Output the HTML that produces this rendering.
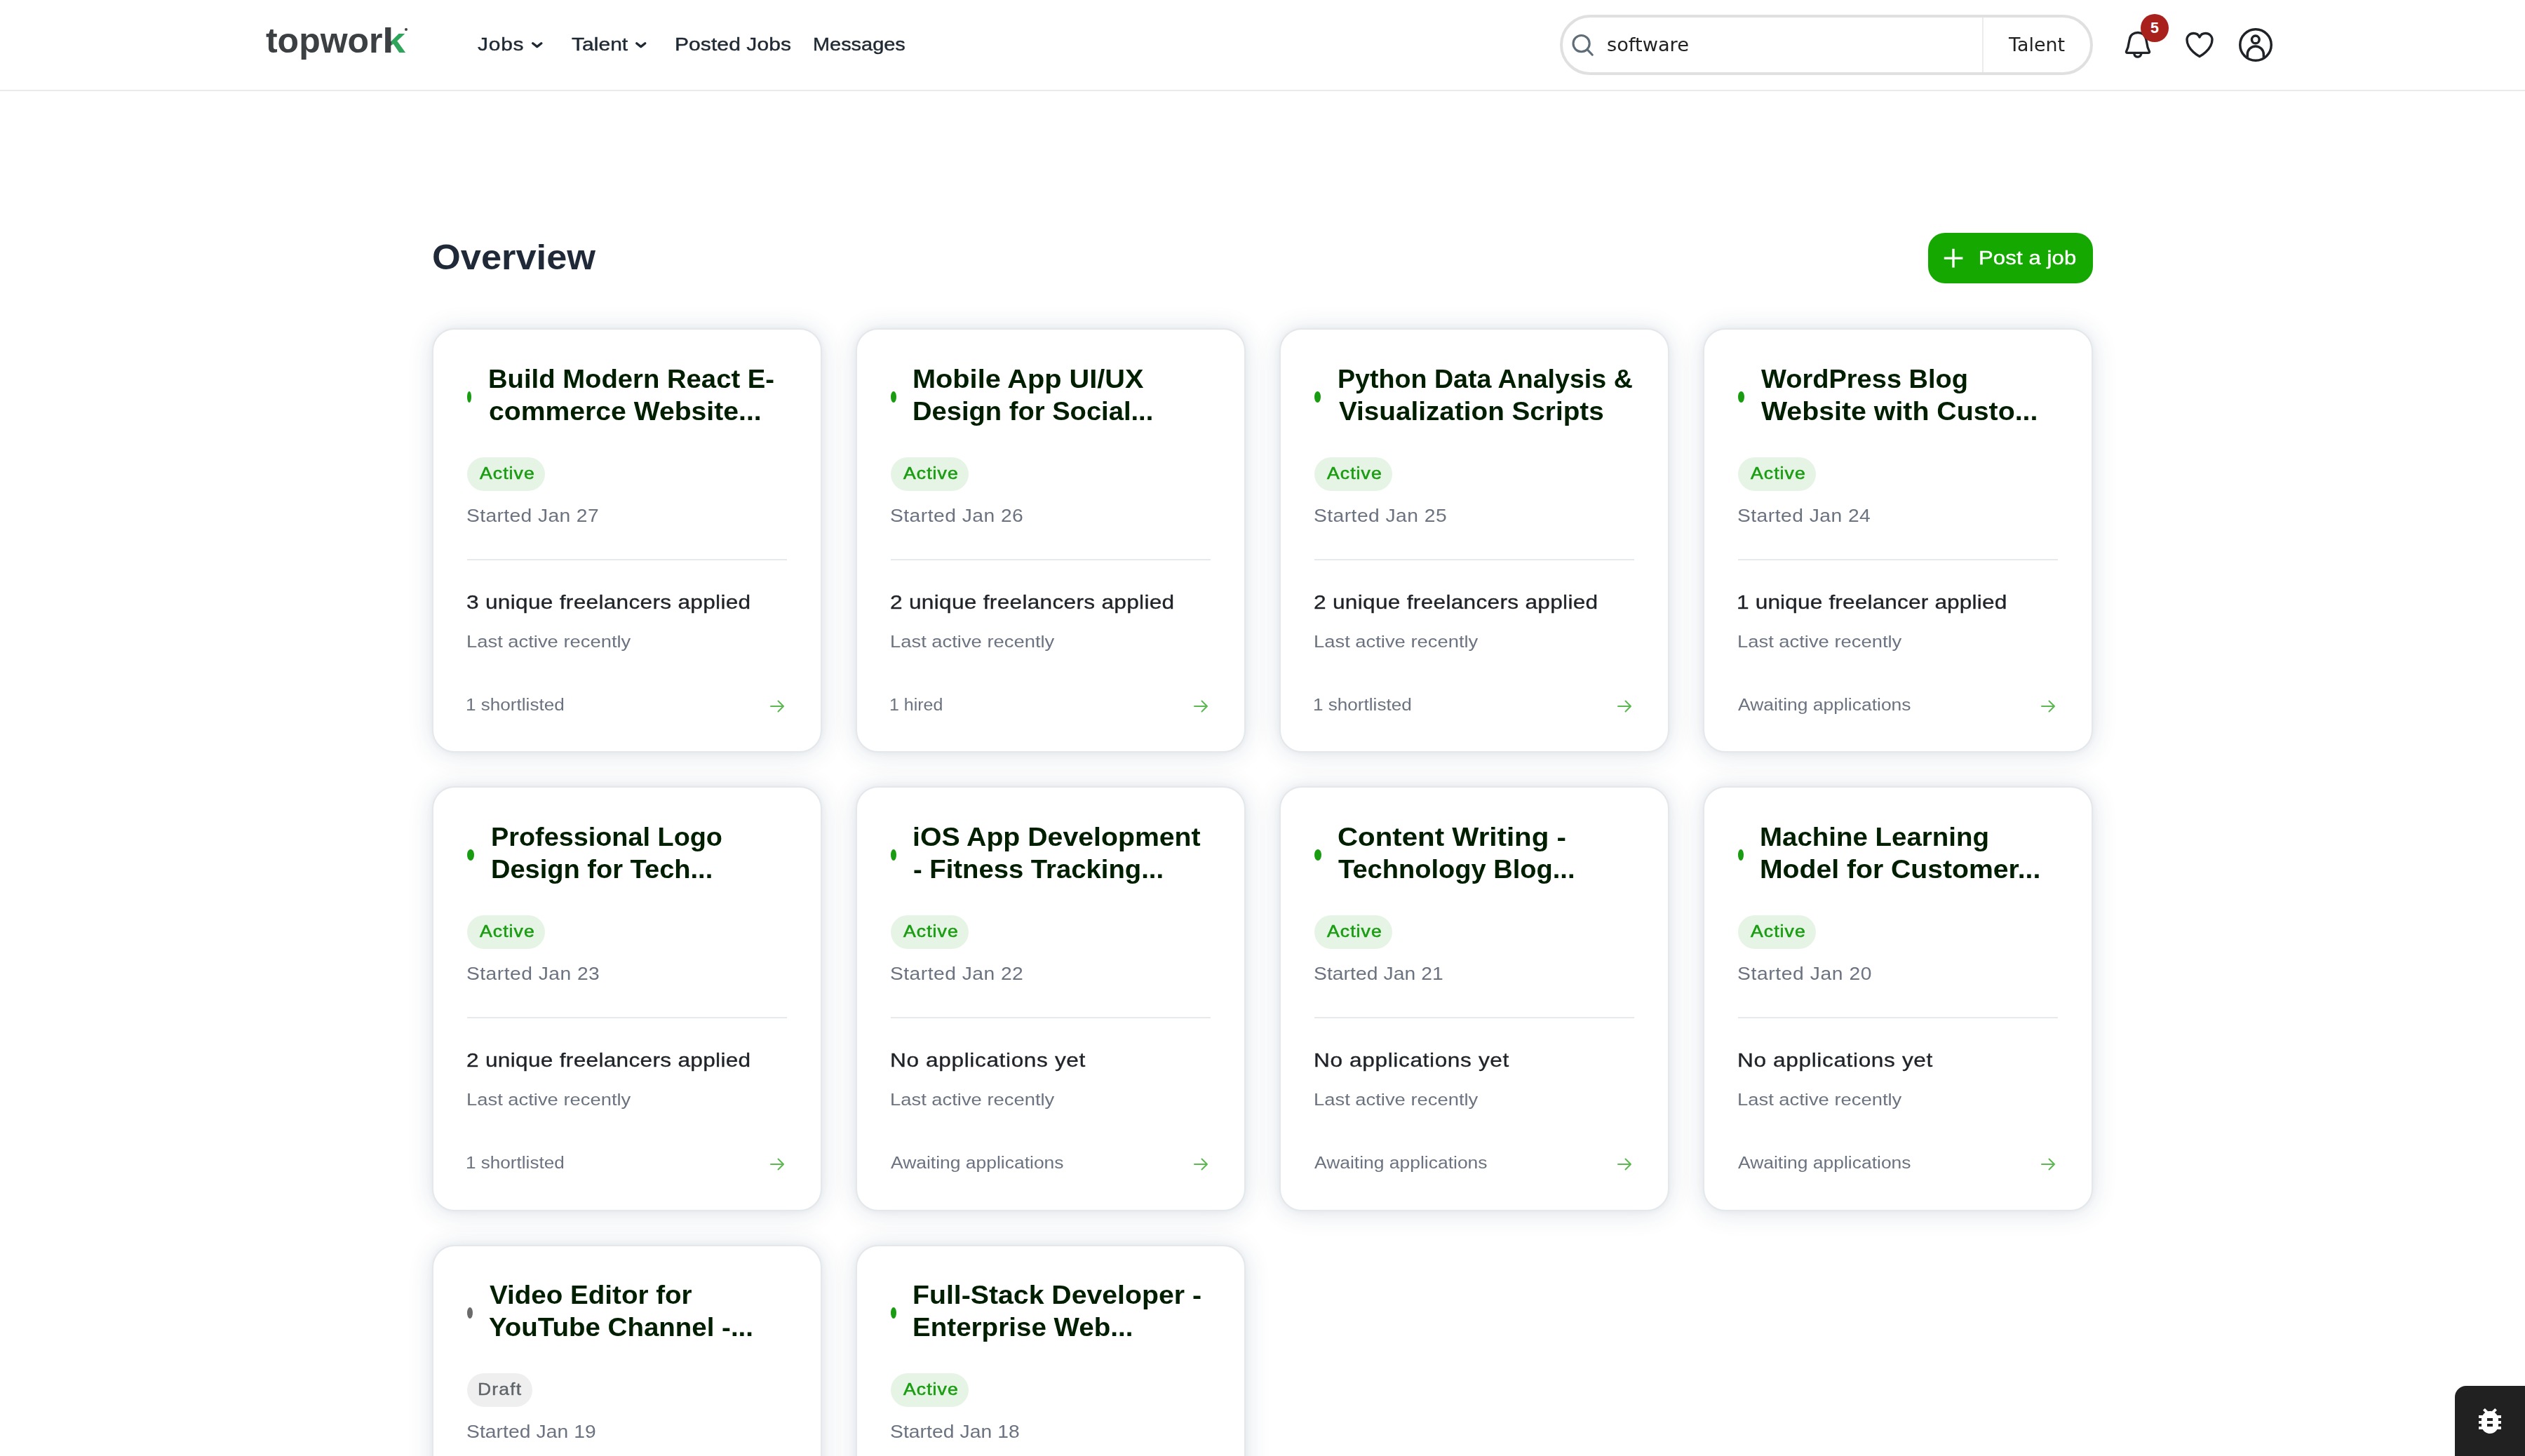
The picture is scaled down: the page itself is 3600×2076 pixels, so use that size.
<!DOCTYPE html>
<html lang="en"><head><meta charset="utf-8"><title>Overview - topwork</title>
<style>
*{box-sizing:border-box;margin:0;padding:0}
html,body{width:3600px;height:2076px;overflow:hidden;background:#fff}
body{font-family:"Liberation Sans",sans-serif;position:relative;-webkit-font-smoothing:antialiased}
.abs{position:absolute}
.tx{position:absolute;white-space:nowrap;line-height:1;display:block;transform-origin:0 0}
header{position:absolute;left:0;top:0;width:3600px;height:130px;background:#fff;border-bottom:2px solid #e9eaec}
.search{position:absolute;left:2224px;top:21px;width:760px;height:86px;border:4px solid #e0e0e0;border-radius:43px;background:#fff}
.search .div{position:absolute;left:598px;top:0;width:2px;height:78px;background:#ececec}
.badge5{position:absolute;left:3052px;top:20px;width:40px;height:40px;border-radius:20px;background:#a8211c;color:#fff;font-weight:700;font-size:21.5px;line-height:41px;text-align:center}
.post{position:absolute;left:2749px;top:332px;width:235px;height:72px;border-radius:24px;background:#14a800}
.card{position:absolute;width:556px;height:604px;background:#fff;border:2px solid #e4e8ea;border-radius:32px;box-shadow:0 2px 36px rgba(30,60,90,.14),0 0 10px rgba(30,60,90,.05)}
.card .dot{position:absolute;left:48px;top:87px;height:16px;border-radius:50%;background:#1a9c12}
.card .dot.g{background:#6b6b6b}
.card .pill{position:absolute;left:48px;top:181px;height:48px;border-radius:24px;background:#e6f4e5}
.card .pill.d{background:#efefef}
.card .hr{position:absolute;left:48px;top:325.5px;width:456px;height:2px;background:#e7eaed}
.card .arr{position:absolute;left:478px;top:524px}
.bug{position:absolute;left:3500px;top:1976px;width:100px;height:100px;background:#212121;border-top-left-radius:16px}
</style></head><body>

<header>
<a class="tx" id="logo" style="left:379.00px;top:33.08px;font-size:50px;font-weight:700;color:#3c4043;letter-spacing:-0.03px">topwor<span style="background:linear-gradient(90deg,#3c4043 10.8px,#2ea55b 10.8px);-webkit-background-clip:text;background-clip:text;color:transparent;display:inline-block;transform:scaleX(1.19);transform-origin:0 0">k</span></a>
<span class="abs" style="left:577px;top:40px;width:4px;height:4px;border-radius:2px;background:#3c4043"></span>
<nav>
<span id="nav1" class="tx" style="left:681.10px;top:50.07px;font-size:26.5px;color:#1f2933;letter-spacing:0.68px;transform:scaleX(1.1300);-webkit-text-stroke:0.45px #1f2933;">Jobs</span>
<span id="nav2" class="tx" style="left:815.10px;top:50.07px;font-size:26.5px;color:#1f2933;letter-spacing:0.05px;transform:scaleX(1.1300);-webkit-text-stroke:0.45px #1f2933;">Talent</span>
<span id="nav3" class="tx" style="left:961.50px;top:50.07px;font-size:26.5px;color:#1f2933;letter-spacing:0.10px;transform:scaleX(1.1300);-webkit-text-stroke:0.45px #1f2933;">Posted Jobs</span>
<span id="nav4" class="tx" style="left:1159.30px;top:50.07px;font-size:26.5px;color:#1f2933;transform:scaleX(1.0907);-webkit-text-stroke:0.45px #1f2933;">Messages</span>
<svg class="abs" style="left:756.3px;top:57.5px" width="20" height="13" viewBox="-2 -2 20 13"><polyline points="1.7,1.7 7.75,6.6 13.8,1.7" fill="none" stroke="#1f2933" stroke-width="3.3" stroke-linecap="round" stroke-linejoin="round"/></svg>
<svg class="abs" style="left:903.8px;top:57.5px" width="20" height="13" viewBox="-2 -2 20 13"><polyline points="1.7,1.7 7.75,6.6 13.8,1.7" fill="none" stroke="#1f2933" stroke-width="3.3" stroke-linecap="round" stroke-linejoin="round"/></svg>
</nav>
<div class="search"><svg class="abs" style="left:10px;top:20px" width="48" height="48" viewBox="0 0 48 48"><circle cx="16.6" cy="17.1" r="11.6" fill="none" stroke="#5e6d78" stroke-width="3.1"/><path d="M25 25.6 L32.3 33.2" stroke="#5e6d78" stroke-width="3.1" stroke-linecap="round"/></svg><span class="div"></span></div>
<span id="q" class="tx" style="left:2291.30px;top:50.84px;font-size:26.667px;color:#222;transform:scaleX(1.0215);font-family:'DejaVu Sans', sans-serif;">software</span>
<span id="qt" class="tx" style="left:2863.80px;top:50.74px;font-size:26.667px;color:#222;transform:scaleX(1.0078);font-family:'DejaVu Sans', sans-serif;">Talent</span>
<svg class="abs" style="left:3024px;top:40px" width="48" height="48" viewBox="0 0 48 48" fill="none" stroke="#1f2328" stroke-width="3.3" stroke-linejoin="round" stroke-linecap="round"><path d="M9.4 35.4C7.6 35.4 7 34.2 7.8 32.8C9.600 29.6 10.600 26 11.2 21L12.4 15.4C13.4 10 18 6.5 24 6.5C30 6.5 34.600 10 35.600 15.4L36.800 21C37.4 26 38.4 29.6 40.2 32.8C41 34.2 40.4 35.4 38.600 35.4Z"/><path d="M18.800 36.800C19.4 40 21.2 41.2 23.800 41.2C26.4 41.2 28.2 40 28.800 36.800"/></svg>
<span class="badge5">5</span>
<svg class="abs" style="left:3112px;top:40px" width="48" height="48" viewBox="0 0 24 24" fill="none" stroke="#1f2328" stroke-width="1.7" stroke-linejoin="round"><path d="M21 8.25c0-2.485-2.099-4.5-4.688-4.5-1.935 0-3.597 1.126-4.312 2.733-.715-1.607-2.377-2.733-4.313-2.733C5.1 3.75 3 5.765 3 8.25c0 7.22 9 12 9 12s9-4.78 9-12z"/></svg>
<svg class="abs" style="left:3192px;top:40px" width="48" height="48" viewBox="0 0 48 48" fill="none" stroke="#1f2328" stroke-width="3.5"><circle cx="24" cy="24" r="22.25"/><circle cx="23.800" cy="16.4" r="5.35"/><path d="M12.25 41.800V37.5A11.55 11.55 0 0 1 35.35 37.5V41.800"/></svg>
</header>
<main>
<h1 id="h1" class="tx" style="left:616.20px;top:341.98px;font-size:50px;font-weight:700;color:#1f2937;transform:scaleX(1.0482);">Overview</h1>
<div class="post"><svg class="abs" style="left:20px;top:20px" width="32" height="32" viewBox="0 0 32 32"><path d="M16 2.8V29.4M2.8 16.1H29.4" stroke="#fff" stroke-width="3.4" stroke-linecap="butt"/></svg></div>
<span id="btn" class="tx" style="left:2821.20px;top:353.82px;font-size:27.5px;color:#ffffff;letter-spacing:0.10px;transform:scaleX(1.1300);-webkit-text-stroke:0.4px #fff;">Post a job</span>
<section class="card" id="card0" style="left:616px;top:468px;height:605px">
<span class="dot" style="width:6px;top:88px"></span>
<h3><span id="t0a" class="tx" style="left:77.80px;top:52.53px;font-size:36px;font-weight:700;color:#001e00;transform:scaleX(1.0625);">Build Modern React E-</span><span id="t0b" class="tx" style="left:78.80px;top:99.03px;font-size:36px;font-weight:700;color:#001e00;transform:scaleX(1.0871);">commerce Website...</span></h3>
<span class="pill" style="width:110.5px;top:182px"></span><span id="b0" class="tx" style="left:65.70px;top:193.61px;font-size:23.5px;color:#1a9c12;letter-spacing:0.95px;transform:scaleX(1.1300);-webkit-text-stroke:0.6px #1a9c12;">Active</span>
<span id="s0" class="tx" style="left:46.80px;top:253.44px;font-size:25px;color:#6b7280;letter-spacing:0.33px;transform:scaleX(1.1300);">Started Jan 27</span>
<span class="hr" style="top:326.5px"></span>
<span id="a0" class="tx" style="left:47.40px;top:375.30px;font-size:28px;color:#1f2328;letter-spacing:0.25px;transform:scaleX(1.1300);-webkit-text-stroke:0.35px #1f2328;">3 unique freelancers applied</span>
<span id="l0" class="tx" style="left:47.00px;top:432.96px;font-size:24.5px;color:#6b7280;transform:scaleX(1.1172);">Last active recently</span>
<span id="f0" class="tx" style="left:46.40px;top:523.91px;font-size:23.5px;color:#6b7280;transform:scaleX(1.1110);">1 shortlisted</span>
<svg class="arr" style="top:525px" width="24" height="24" viewBox="0 0 24 24" fill="none" stroke="#5cb850" stroke-width="2" stroke-linecap="round" stroke-linejoin="round"><path d="M13.5 4.5L21 12m0 0l-7.5 7.5M21 12H3"/></svg>
</section>
<section class="card" id="card1" style="left:1220px;top:468px;height:605px">
<span class="dot" style="width:8px;top:88px"></span>
<h3><span id="t1a" class="tx" style="left:78.50px;top:52.53px;font-size:36px;font-weight:700;color:#001e00;transform:scaleX(1.1031);">Mobile App UI/UX</span> <span id="t1b" class="tx" style="left:78.50px;top:99.03px;font-size:36px;font-weight:700;color:#001e00;transform:scaleX(1.0593);">Design for Social...</span></h3>
<span class="pill" style="width:110.5px;top:182px"></span><span id="b1" class="tx" style="left:65.70px;top:193.61px;font-size:23.5px;color:#1a9c12;letter-spacing:0.95px;transform:scaleX(1.1300);-webkit-text-stroke:0.6px #1a9c12;">Active</span>
<span id="s1" class="tx" style="left:46.80px;top:253.44px;font-size:25px;color:#6b7280;letter-spacing:0.41px;transform:scaleX(1.1300);">Started Jan 26</span>
<span class="hr" style="top:326.5px"></span>
<span id="a1" class="tx" style="left:47.40px;top:375.30px;font-size:28px;color:#1f2328;letter-spacing:0.25px;transform:scaleX(1.1300);-webkit-text-stroke:0.35px #1f2328;">2 unique freelancers applied</span>
<span id="l1" class="tx" style="left:47.00px;top:432.96px;font-size:24.5px;color:#6b7280;transform:scaleX(1.1172);">Last active recently</span>
<span id="f1" class="tx" style="left:46.00px;top:523.91px;font-size:23.5px;color:#6b7280;transform:scaleX(1.0611);">1 hired</span>
<svg class="arr" style="top:525px" width="24" height="24" viewBox="0 0 24 24" fill="none" stroke="#5cb850" stroke-width="2" stroke-linecap="round" stroke-linejoin="round"><path d="M13.5 4.5L21 12m0 0l-7.5 7.5M21 12H3"/></svg>
</section>
<section class="card" id="card2" style="left:1824px;top:468px;height:605px">
<span class="dot" style="width:9px;top:88px"></span>
<h3><span id="t2a" class="tx" style="left:80.70px;top:52.53px;font-size:36px;font-weight:700;color:#001e00;transform:scaleX(1.0449);">Python Data Analysis &</span> <span id="t2b" class="tx" style="left:82.70px;top:99.03px;font-size:36px;font-weight:700;color:#001e00;transform:scaleX(1.0747);">Visualization Scripts</span></h3>
<span class="pill" style="width:110.5px;top:182px"></span><span id="b2" class="tx" style="left:65.70px;top:193.61px;font-size:23.5px;color:#1a9c12;letter-spacing:0.95px;transform:scaleX(1.1300);-webkit-text-stroke:0.6px #1a9c12;">Active</span>
<span id="s2" class="tx" style="left:46.80px;top:253.44px;font-size:25px;color:#6b7280;letter-spacing:0.40px;transform:scaleX(1.1300);">Started Jan 25</span>
<span class="hr" style="top:326.5px"></span>
<span id="a2" class="tx" style="left:47.40px;top:375.30px;font-size:28px;color:#1f2328;letter-spacing:0.25px;transform:scaleX(1.1300);-webkit-text-stroke:0.35px #1f2328;">2 unique freelancers applied</span>
<span id="l2" class="tx" style="left:47.00px;top:432.96px;font-size:24.5px;color:#6b7280;transform:scaleX(1.1172);">Last active recently</span>
<span id="f2" class="tx" style="left:46.40px;top:523.91px;font-size:23.5px;color:#6b7280;transform:scaleX(1.1110);">1 shortlisted</span>
<svg class="arr" style="top:525px" width="24" height="24" viewBox="0 0 24 24" fill="none" stroke="#5cb850" stroke-width="2" stroke-linecap="round" stroke-linejoin="round"><path d="M13.5 4.5L21 12m0 0l-7.5 7.5M21 12H3"/></svg>
</section>
<section class="card" id="card3" style="left:2428px;top:468px;height:605px">
<span class="dot" style="width:9px;top:88px"></span>
<h3><span id="t3a" class="tx" style="left:80.80px;top:52.53px;font-size:36px;font-weight:700;color:#001e00;transform:scaleX(1.0561);">WordPress Blog</span> <span id="t3b" class="tx" style="left:80.80px;top:99.03px;font-size:36px;font-weight:700;color:#001e00;transform:scaleX(1.0914);">Website with Custo...</span></h3>
<span class="pill" style="width:110.5px;top:182px"></span><span id="b3" class="tx" style="left:65.70px;top:193.61px;font-size:23.5px;color:#1a9c12;letter-spacing:0.95px;transform:scaleX(1.1300);-webkit-text-stroke:0.6px #1a9c12;">Active</span>
<span id="s3" class="tx" style="left:46.80px;top:253.44px;font-size:25px;color:#6b7280;letter-spacing:0.41px;transform:scaleX(1.1300);">Started Jan 24</span>
<span class="hr" style="top:326.5px"></span>
<span id="a3" class="tx" style="left:46.40px;top:375.30px;font-size:28px;color:#1f2328;letter-spacing:0.12px;transform:scaleX(1.1300);-webkit-text-stroke:0.35px #1f2328;">1 unique freelancer applied</span>
<span id="l3" class="tx" style="left:47.00px;top:432.96px;font-size:24.5px;color:#6b7280;transform:scaleX(1.1172);">Last active recently</span>
<span id="f3" class="tx" style="left:48.40px;top:523.91px;font-size:23.5px;color:#6b7280;transform:scaleX(1.1256);">Awaiting applications</span>
<svg class="arr" style="top:525px" width="24" height="24" viewBox="0 0 24 24" fill="none" stroke="#5cb850" stroke-width="2" stroke-linecap="round" stroke-linejoin="round"><path d="M13.5 4.5L21 12m0 0l-7.5 7.5M21 12H3"/></svg>
</section>
<section class="card" id="card4" style="left:616px;top:1121px;height:606px">
<span class="dot" style="width:10px;top:88px"></span>
<h3><span id="t4a" class="tx" style="left:81.60px;top:52.53px;font-size:36px;font-weight:700;color:#001e00;transform:scaleX(1.0507);">Professional Logo</span> <span id="t4b" class="tx" style="left:81.60px;top:99.03px;font-size:36px;font-weight:700;color:#001e00;transform:scaleX(1.0563);">Design for Tech...</span></h3>
<span class="pill" style="width:110.5px;top:182px"></span><span id="b4" class="tx" style="left:65.70px;top:193.61px;font-size:23.5px;color:#1a9c12;letter-spacing:0.95px;transform:scaleX(1.1300);-webkit-text-stroke:0.6px #1a9c12;">Active</span>
<span id="s4" class="tx" style="left:46.80px;top:253.44px;font-size:25px;color:#6b7280;letter-spacing:0.41px;transform:scaleX(1.1300);">Started Jan 23</span>
<span class="hr" style="top:326.5px"></span>
<span id="a4" class="tx" style="left:47.40px;top:375.30px;font-size:28px;color:#1f2328;letter-spacing:0.25px;transform:scaleX(1.1300);-webkit-text-stroke:0.35px #1f2328;">2 unique freelancers applied</span>
<span id="l4" class="tx" style="left:47.00px;top:432.96px;font-size:24.5px;color:#6b7280;transform:scaleX(1.1172);">Last active recently</span>
<span id="f4" class="tx" style="left:46.40px;top:523.91px;font-size:23.5px;color:#6b7280;transform:scaleX(1.1110);">1 shortlisted</span>
<svg class="arr" style="top:525px" width="24" height="24" viewBox="0 0 24 24" fill="none" stroke="#5cb850" stroke-width="2" stroke-linecap="round" stroke-linejoin="round"><path d="M13.5 4.5L21 12m0 0l-7.5 7.5M21 12H3"/></svg>
</section>
<section class="card" id="card5" style="left:1220px;top:1121px;height:606px">
<span class="dot" style="width:8px;top:88px"></span>
<h3><span id="t5a" class="tx" style="left:78.50px;top:52.53px;font-size:36px;font-weight:700;color:#001e00;transform:scaleX(1.0901);">iOS App Development</span> <span id="t5b" class="tx" style="left:79.50px;top:99.03px;font-size:36px;font-weight:700;color:#001e00;transform:scaleX(1.0623);">- Fitness Tracking...</span></h3>
<span class="pill" style="width:110.5px;top:182px"></span><span id="b5" class="tx" style="left:65.70px;top:193.61px;font-size:23.5px;color:#1a9c12;letter-spacing:0.95px;transform:scaleX(1.1300);-webkit-text-stroke:0.6px #1a9c12;">Active</span>
<span id="s5" class="tx" style="left:46.80px;top:253.44px;font-size:25px;color:#6b7280;letter-spacing:0.41px;transform:scaleX(1.1300);">Started Jan 22</span>
<span class="hr" style="top:326.5px"></span>
<span id="a5" class="tx" style="left:47.10px;top:375.30px;font-size:28px;color:#1f2328;letter-spacing:0.54px;transform:scaleX(1.1300);-webkit-text-stroke:0.35px #1f2328;">No applications yet</span>
<span id="l5" class="tx" style="left:47.00px;top:432.96px;font-size:24.5px;color:#6b7280;transform:scaleX(1.1172);">Last active recently</span>
<span id="f5" class="tx" style="left:48.40px;top:523.91px;font-size:23.5px;color:#6b7280;transform:scaleX(1.1256);">Awaiting applications</span>
<svg class="arr" style="top:525px" width="24" height="24" viewBox="0 0 24 24" fill="none" stroke="#5cb850" stroke-width="2" stroke-linecap="round" stroke-linejoin="round"><path d="M13.5 4.5L21 12m0 0l-7.5 7.5M21 12H3"/></svg>
</section>
<section class="card" id="card6" style="left:1824px;top:1121px;height:606px">
<span class="dot" style="width:10px;top:88px"></span>
<h3><span id="t6a" class="tx" style="left:81.20px;top:52.53px;font-size:36px;font-weight:700;color:#001e00;transform:scaleX(1.1190);">Content Writing -</span> <span id="t6b" class="tx" style="left:82.20px;top:99.03px;font-size:36px;font-weight:700;color:#001e00;transform:scaleX(1.0568);">Technology Blog...</span></h3>
<span class="pill" style="width:110.5px;top:182px"></span><span id="b6" class="tx" style="left:65.70px;top:193.61px;font-size:23.5px;color:#1a9c12;letter-spacing:0.95px;transform:scaleX(1.1300);-webkit-text-stroke:0.6px #1a9c12;">Active</span>
<span id="s6" class="tx" style="left:46.80px;top:253.44px;font-size:25px;color:#6b7280;letter-spacing:0.06px;transform:scaleX(1.1300);">Started Jan 21</span>
<span class="hr" style="top:326.5px"></span>
<span id="a6" class="tx" style="left:47.10px;top:375.30px;font-size:28px;color:#1f2328;letter-spacing:0.54px;transform:scaleX(1.1300);-webkit-text-stroke:0.35px #1f2328;">No applications yet</span>
<span id="l6" class="tx" style="left:47.00px;top:432.96px;font-size:24.5px;color:#6b7280;transform:scaleX(1.1172);">Last active recently</span>
<span id="f6" class="tx" style="left:48.40px;top:523.91px;font-size:23.5px;color:#6b7280;transform:scaleX(1.1256);">Awaiting applications</span>
<svg class="arr" style="top:525px" width="24" height="24" viewBox="0 0 24 24" fill="none" stroke="#5cb850" stroke-width="2" stroke-linecap="round" stroke-linejoin="round"><path d="M13.5 4.5L21 12m0 0l-7.5 7.5M21 12H3"/></svg>
</section>
<section class="card" id="card7" style="left:2428px;top:1121px;height:606px">
<span class="dot" style="width:8px;top:88px"></span>
<h3><span id="t7a" class="tx" style="left:78.80px;top:52.53px;font-size:36px;font-weight:700;color:#001e00;transform:scaleX(1.0682);">Machine Learning</span> <span id="t7b" class="tx" style="left:78.80px;top:99.03px;font-size:36px;font-weight:700;color:#001e00;transform:scaleX(1.0877);">Model for Customer...</span></h3>
<span class="pill" style="width:110.5px;top:182px"></span><span id="b7" class="tx" style="left:65.70px;top:193.61px;font-size:23.5px;color:#1a9c12;letter-spacing:0.95px;transform:scaleX(1.1300);-webkit-text-stroke:0.6px #1a9c12;">Active</span>
<span id="s7" class="tx" style="left:46.80px;top:253.44px;font-size:25px;color:#6b7280;letter-spacing:0.53px;transform:scaleX(1.1300);">Started Jan 20</span>
<span class="hr" style="top:326.5px"></span>
<span id="a7" class="tx" style="left:47.10px;top:375.30px;font-size:28px;color:#1f2328;letter-spacing:0.54px;transform:scaleX(1.1300);-webkit-text-stroke:0.35px #1f2328;">No applications yet</span>
<span id="l7" class="tx" style="left:47.00px;top:432.96px;font-size:24.5px;color:#6b7280;transform:scaleX(1.1172);">Last active recently</span>
<span id="f7" class="tx" style="left:48.40px;top:523.91px;font-size:23.5px;color:#6b7280;transform:scaleX(1.1256);">Awaiting applications</span>
<svg class="arr" style="top:525px" width="24" height="24" viewBox="0 0 24 24" fill="none" stroke="#5cb850" stroke-width="2" stroke-linecap="round" stroke-linejoin="round"><path d="M13.5 4.5L21 12m0 0l-7.5 7.5M21 12H3"/></svg>
</section>
<section class="card" id="card8" style="left:616px;top:1775px;height:605px">
<span class="dot g" style="width:8px;top:87px"></span>
<h3><span id="t8a" class="tx" style="left:80.00px;top:51.53px;font-size:36px;font-weight:700;color:#001e00;transform:scaleX(1.0714);">Video Editor for</span> <span id="t8b" class="tx" style="left:79.00px;top:98.03px;font-size:36px;font-weight:700;color:#001e00;transform:scaleX(1.0690);">YouTube Channel -...</span></h3>
<span class="pill d" style="width:93px;top:181px"></span><span id="b8" class="tx" style="left:63.40px;top:192.61px;font-size:23.5px;color:#5e6468;letter-spacing:1.01px;transform:scaleX(1.1300);-webkit-text-stroke:0.4px #5e6468;">Draft</span>
<span id="s8" class="tx" style="left:46.80px;top:252.44px;font-size:25px;color:#6b7280;letter-spacing:0.06px;transform:scaleX(1.1300);">Started Jan 19</span>
</section>
<section class="card" id="card9" style="left:1220px;top:1775px;height:605px">
<span class="dot" style="width:8px;top:87px"></span>
<h3><span id="t9a" class="tx" style="left:78.80px;top:51.53px;font-size:36px;font-weight:700;color:#001e00;transform:scaleX(1.0896);">Full-Stack Developer -</span> <span id="t9b" class="tx" style="left:78.80px;top:98.03px;font-size:36px;font-weight:700;color:#001e00;transform:scaleX(1.0717);">Enterprise Web...</span></h3>
<span class="pill" style="width:110.5px;top:181px"></span><span id="b9" class="tx" style="left:65.70px;top:192.61px;font-size:23.5px;color:#1a9c12;letter-spacing:0.95px;transform:scaleX(1.1300);-webkit-text-stroke:0.6px #1a9c12;">Active</span>
<span id="s9" class="tx" style="left:46.80px;top:252.44px;font-size:25px;color:#6b7280;letter-spacing:0.06px;transform:scaleX(1.1300);">Started Jan 18</span>
</section>
</main>
<div class="bug"><svg class="abs" style="left:26px;top:26px" width="48" height="48" viewBox="0 0 24 24" fill="#fff"><path d="M20 8h-2.81c-.45-.78-1.07-1.45-1.82-1.96L17 4.41 15.59 3l-2.17 2.17C12.96 5.060 12.490 5 12 5c-.49 0-.96.06-1.410.17L8.410 3 7 4.410l1.620 1.630C7.880 6.550 7.260 7.220 6.810 8H4v2h2.090c-.05.33-.09.66-.09 1v1H4v2h2v1c0 .34.04.67.09 1H4v2h2.810c1.040 1.790 2.970 3 5.190 3s4.150-1.210 5.190-3H20v-2h-2.090c.05-.33.09-.66.09-1v-1h2v-2h-2v-1c0-.34-.04-.67-.09-1H20V8zm-6 8h-4v-2h4v2zm0-4h-4v-2h4v2z"/></svg></div>
</body></html>
